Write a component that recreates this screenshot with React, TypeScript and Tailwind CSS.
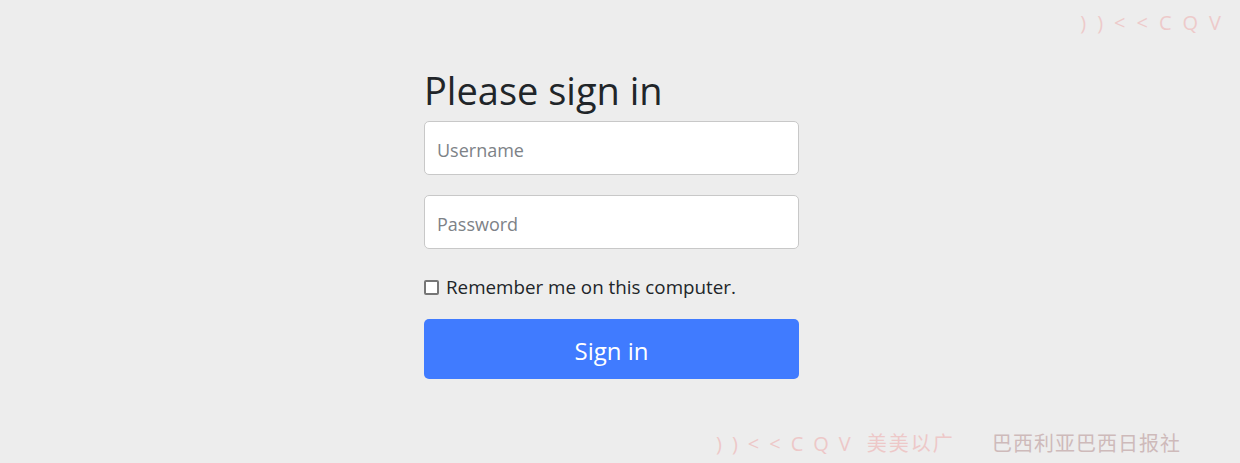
import React from 'react';

export default function App() {
  return (
    <div
      className="relative h-[463px] w-full overflow-hidden bg-[#ededed] text-[#212529]"
      style={{ fontFamily: '"Open Sans", "Noto Sans", sans-serif' }}
    >
      {/* faint watermarks */}
      <div className="pointer-events-none absolute right-[8px] top-[8px] text-[20px] tracking-[11px] text-[#eeb4b4] opacity-60">
        ))&lt;&lt;CQV
      </div>
      <div
        className="pointer-events-none absolute bottom-[4px] left-[716px] whitespace-nowrap text-[20px] text-[#eeb0b0] opacity-60"
        style={{ fontFamily: '"Open Sans", "Noto Sans CJK SC", sans-serif' }}
      >
        <span className="tracking-[10px]">))&lt;&lt;CQV</span>
        <span className="ml-[6px] tracking-[2px]">美美以广 </span>
        <span className="ml-[30px] tracking-[1px] text-[#b99]">巴西利亚巴西日报社</span>
      </div>

      <div className="flex justify-center pr-[17px] pt-[66px]">
        <form className="flex w-[375px] flex-col" onSubmit={(e) => e.preventDefault()}>
          <h2 className="mb-[7px] text-[38px] leading-[48px] font-normal">Please sign in</h2>
          <input
            type="text"
            placeholder="Username"
            className="h-[54px] w-full rounded-[5px] border border-[#c8c8c8] bg-white px-[12px] pt-[4px] text-[18px] text-[#495057] outline-none placeholder:text-[#7d8287]"
          />
          <input
            type="password"
            placeholder="Password"
            className="mt-[20px] h-[54px] w-full rounded-[5px] border border-[#c8c8c8] bg-white px-[12px] pt-[4px] text-[18px] text-[#495057] outline-none placeholder:text-[#7d8287]"
          />
          <label className="mt-[25px] flex items-center gap-[7px] text-[18.8px] leading-[26px]">
            <input
              type="checkbox"
              className="h-[15px] w-[15px] appearance-none rounded-[2px] border-2 border-[#767676] bg-white"
            />
            Remember me on this computer.
          </label>
          <button
            type="submit"
            className="mt-[19px] h-[60px] w-full rounded-[5px] bg-[#407bff] pt-[4px] text-[24px] text-white"
          >
            Sign in
          </button>
        </form>
      </div>
    </div>
  );
}
